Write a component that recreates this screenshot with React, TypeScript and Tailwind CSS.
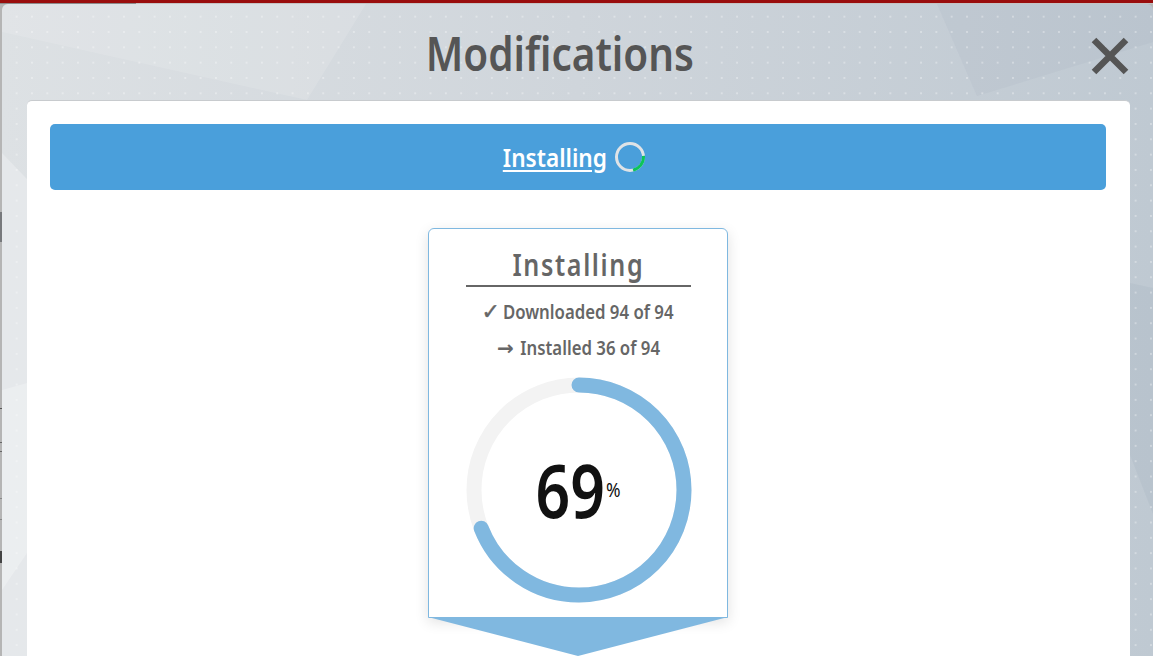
const FONT = "font-['Noto_Sans',sans-serif]";
const GLYPH = "font-['DejaVu_Sans',sans-serif]";

function ModalBackdrop() {
  return (
    <svg className="absolute inset-0 h-full w-full" viewBox="0 0 1151 652" preserveAspectRatio="none">
      <defs>
        <linearGradient id="base" x1="0" y1="0" x2="1" y2="0">
          <stop offset="0" stopColor="#dde1e4" />
          <stop offset="0.5" stopColor="#cfd5db" />
          <stop offset="1" stopColor="#bfc9d2" />
        </linearGradient>
      </defs>
      <rect width="1151" height="652" fill="url(#base)" />
      <polygon points="0,0 364,0 305,96 0,28" fill="#ffffff" fillOpacity="0.12" />
      <polygon points="935,0 1151,0 1151,38 975,92" fill="#8fa0ae" fillOpacity="0.1" />
      <polygon points="0,149 25,175 25,652 0,652" fill="#ffffff" fillOpacity="0.25" />
      <polygon points="0,386 25,379 25,549 0,586" fill="#ffffff" fillOpacity="0.25" />
      <polygon points="1128,279 1151,284 1151,510 1128,451" fill="#8fa0ae" fillOpacity="0.12" />
    </svg>
  );
}

function Ring({ percent }: { percent: number }) {
  const r = 105;
  const circumference = 2 * Math.PI * r;
  return (
    <div className="relative mt-[16px] ml-[1px] h-[226px] w-[226px]">
      <svg className="h-full w-full -rotate-90" viewBox="0 0 226 226">
        <circle cx="113" cy="113" r={r} fill="none" stroke="#f3f3f3" strokeWidth="15" />
        <circle
          cx="113"
          cy="113"
          r={r}
          fill="none"
          stroke="#80b8e0"
          strokeWidth="15"
          strokeLinecap="round"
          strokeDasharray={`${(circumference * percent) / 100} ${circumference}`}
        />
      </svg>
      <div className="absolute inset-0 flex items-center justify-center pr-[7px]">
        <span className="inline-block scale-x-[0.82] text-[74px] leading-none font-semibold text-[#111111]">{percent}</span>
        <span className="ml-[-8px] inline-block scale-x-[0.875] text-[20px] leading-none text-[#111111]">%</span>
      </div>
    </div>
  );
}

export default function App() {
  return (
    <div className={`${FONT} relative h-[656px] w-[1153px] overflow-hidden bg-[#b5b5b5]`}>
      <div className="h-[3px] bg-[#990d0d]" />
      <div className="flex h-px">
        <div className="w-[136px] bg-[#8c8c8c]" />
        <div className="flex-1 bg-[#c4c4c4]" />
      </div>
      <div className="absolute top-[212px] left-0 h-[30px] w-[2px] bg-[#77797c]" />
      <div className="absolute top-[408px] left-0 h-px w-[2px] bg-[#555555]" />
      <div className="absolute top-[442px] left-0 h-[10px] w-[2px] border-y border-[#666666]" />
      <div className="absolute top-[498px] left-0 h-[22px] w-[2px] border-y border-[#888888]" />
      <div className="absolute top-[551px] left-0 h-[12px] w-[2px] bg-[#444444]" />
      <div className="relative ml-[2px] h-[652px] w-[1151px] overflow-hidden rounded-t-[6px]">
        <ModalBackdrop />
        <div className="absolute top-[5px] right-0 bottom-0 left-[7px] bg-[radial-gradient(circle,rgba(255,255,255,0.32)_0.8px,transparent_1.1px)] bg-[length:15.33px_15.33px]" />
        <div className="relative flex h-[96px] items-center justify-center pr-[35px]">
          <h1 className="mt-[2px] inline-block scale-x-[0.86] text-[47px] leading-none font-semibold text-[#555555]">Modifications</h1>
          <svg className="absolute top-[33px] right-[24px] h-[38px] w-[38px]" viewBox="0 0 38 38">
            <path d="M3 3 L35 35 M35 3 L3 35" stroke="#555555" strokeWidth="6.5" fill="none" />
          </svg>
        </div>
        <div className="relative ml-[25px] w-[1103px] rounded-t-[5px] border-t border-[#c8cbce] bg-white pt-[23px] pr-[24px] pb-[40px] pl-[23px]">
          <div className="flex h-[66px] items-center justify-center rounded-[5px] bg-[#4a9fdb] pr-[15px]">
            <span className="mt-[1px] inline-block scale-x-[0.87] text-[26px] font-semibold text-white underline underline-offset-[3px]">Installing</span>
            <svg className="h-[32px] w-[32px] -rotate-90" viewBox="0 0 32 32">
              <circle cx="16" cy="16" r="13.5" fill="none" stroke="#dfe3e6" strokeWidth="3" />
              <circle cx="16" cy="16" r="13.5" fill="none" stroke="#0cc45a" strokeWidth="3" strokeDasharray="19 85" strokeDashoffset="-20" />
            </svg>
          </div>
          <div className="relative mx-auto mt-[38px] flex h-[390px] w-[300px] flex-col items-center rounded-t-[6px] border border-[#7fb8e0] bg-white pt-[15px] shadow-[0_4px_14px_rgba(0,0,0,0.12)]">
            <div className="flex h-[43px] w-[225px] justify-center border-b-2 border-[#666666]">
              <span className="inline-block scale-x-[0.81] text-[31px] leading-[40px] font-semibold tracking-[2px] whitespace-nowrap text-[#666666]">Installing</span>
            </div>
            <div className="mt-[12px] ml-[13px] flex h-[26px] items-center justify-center">
              <span className={`${GLYPH} mr-[-11px] text-[22px] leading-[26px] font-bold text-[#666666] [-webkit-text-stroke:0.5px_#666666]`}>✓</span>
              <span className="inline-block scale-x-[0.86] text-[19.5px] leading-[26px] font-semibold whitespace-nowrap text-[#666666]">Downloaded 94 of 94</span>
            </div>
            <div className="mt-[10px] ml-[12px] flex h-[26px] items-center justify-center">
              <span className={`${GLYPH} mr-[-5px] text-[20px] leading-[26px] font-bold text-[#666666]`}>→</span>
              <span className="inline-block scale-x-[0.86] text-[19.5px] leading-[26px] font-semibold whitespace-nowrap text-[#666666]">Installed 36 of 94</span>
            </div>
            <Ring percent={69} />
            <div className="absolute top-[388px] -left-px h-[39px] w-[300px] bg-[#80b8e0] [clip-path:polygon(0_0,100%_0,50%_100%)]" />
          </div>
        </div>
      </div>
    </div>
  );
}
